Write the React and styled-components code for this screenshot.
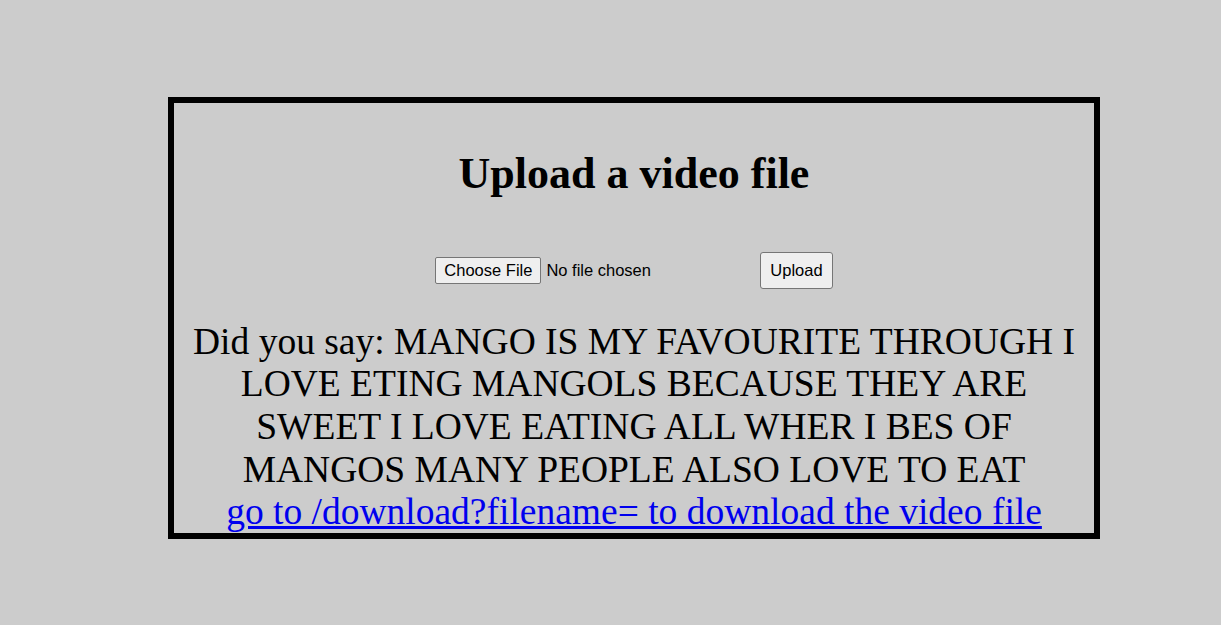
import React from "react";
import styled, { createGlobalStyle } from "styled-components";

const Global = createGlobalStyle`
  html, body { background: #cccccc; }
  body { margin: 8px; font-family: "Liberation Serif", "Times New Roman", serif; color: #000; }
`;

const Box = styled.div`
  margin: 89px 0 0 160px;
  width: 920px;
  height: 430px;
  border: 6px solid #000;
  box-sizing: content-box;
  display: flex;
  flex-direction: column;
  align-items: center;
  overflow: hidden;
`;

const Title = styled.h1`
  font-size: 44px;
  font-weight: bold;
  margin: 46px 0 0;
  line-height: 1.15;
`;

const Form = styled.form`
  display: flex;
  align-items: center;
  gap: 12px;
  margin-top: 52px;
  font-family: "Liberation Sans", Arial, sans-serif;
`;

const FileInput = styled.input`
  font-family: "Liberation Sans", Arial, sans-serif;
  font-size: 16.5px;

  &::file-selector-button {
    font-family: "Liberation Sans", Arial, sans-serif;
    font-size: 16.5px;
    padding: 3px 8px;
    margin-right: 5px;
    background: #efefef;
    border: 1px solid #767676;
    border-radius: 2px;
    color: #000;
  }
`;

const UploadButton = styled.button`
  font-family: "Liberation Sans", Arial, sans-serif;
  font-size: 16.5px;
  padding: 8px 9px;
  background: #efefef;
  border: 1px solid #767676;
  border-radius: 3px;
  color: #000;
`;

const Result = styled.p`
  margin: 32px 0 0;
  padding: 0 12px;
  font-size: 37.5px;
  line-height: 42.7px;
  text-align: center;
`;

const Link = styled.a`
  color: #0000ee;
  text-decoration: underline;
`;

export default function App() {
  return (
    <>
      <Global />
      <Box>
        <Title>Upload a video file</Title>
        <Form onSubmit={(e) => e.preventDefault()}>
          <FileInput type="file" />
          <UploadButton type="submit">Upload</UploadButton>
        </Form>
        <Result>
          Did you say: MANGO IS MY FAVOURITE THROUGH I LOVE ETING MANGOLS BECAUSE THEY ARE SWEET I LOVE EATING ALL WHER I BES OF MANGOS MANY PEOPLE ALSO LOVE TO EAT
          <br />
          <Link href="#">go to /download?filename= to download the video file</Link>
        </Result>
      </Box>
    </>
  );
}
